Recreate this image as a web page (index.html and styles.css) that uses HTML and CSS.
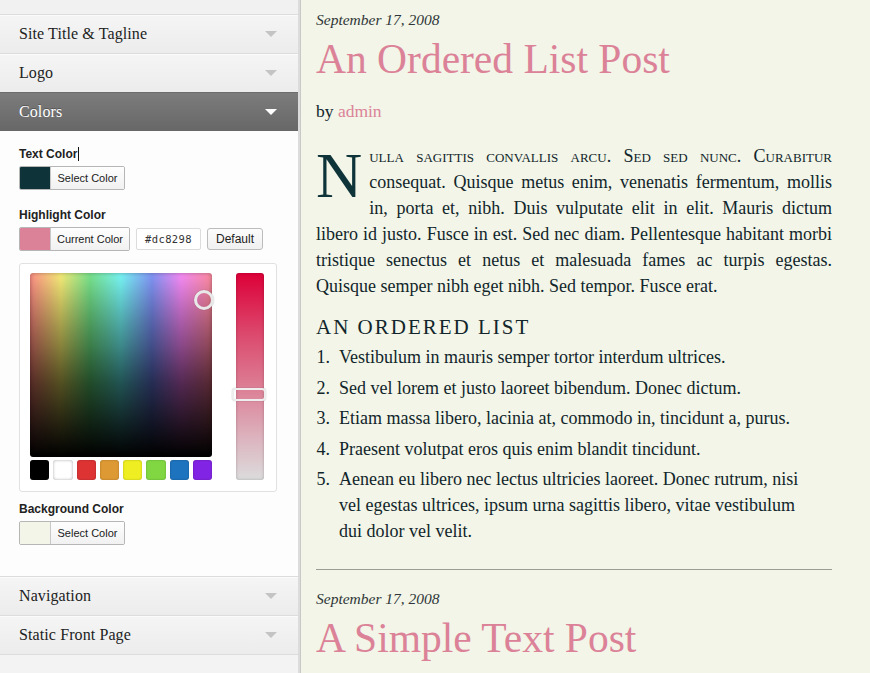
FILE: index.html
```html
<!DOCTYPE html>
<html>
<head>
<meta charset="utf-8">
<link rel="stylesheet" href="styles.css">
</head>
<body>
<div class="app">
  <aside class="sidebar">
    <div class="top-strip"></div>
    <div class="section"><span class="section-title">Site Title &amp; Tagline</span><span class="arrow"></span></div>
    <div class="section"><span class="section-title">Logo</span><span class="arrow"></span></div>
    <div class="section section-open"><span class="section-title">Colors</span><span class="arrow"></span></div>
    <div class="panel">
      <div class="field-label">Text Color<span class="caret"></span></div>
      <div class="color-btn"><span class="swatch swatch-text"></span><span class="btn-text">Select Color</span></div>

      <div class="field-label label-gap">Highlight Color</div>
      <div class="btn-row">
        <div class="color-btn"><span class="swatch swatch-highlight"></span><span class="btn-text btn-text-wide">Current Color</span></div>
        <div class="hex-input">#dc8298</div>
        <div class="default-btn">Default</div>
      </div>

      <div class="picker">
        <div class="picker-left">
          <div class="square"><span class="marker"></span></div>
          <div class="palette">
            <span class="pal pal-black"></span>
            <span class="pal pal-white"></span>
            <span class="pal pal-red"></span>
            <span class="pal pal-orange"></span>
            <span class="pal pal-yellow"></span>
            <span class="pal pal-green"></span>
            <span class="pal pal-blue"></span>
            <span class="pal pal-purple"></span>
          </div>
        </div>
        <div class="strip"><span class="handle"></span></div>
      </div>

      <div class="field-label label-gap-small">Background Color</div>
      <div class="color-btn"><span class="swatch swatch-bg"></span><span class="btn-text">Select Color</span></div>
    </div>
    <div class="section"><span class="section-title">Navigation</span><span class="arrow"></span></div>
    <div class="section"><span class="section-title">Static Front Page</span><span class="arrow"></span></div>
    <div class="bottom-strip"></div>
  </aside>

  <main class="content">
    <article class="post">
      <div class="date">September 17, 2008</div>
      <h1 class="post-title">An Ordered List Post</h1>
      <div class="byline">by <span class="author">admin</span></div>
      <p class="lead"><span class="dropcap">N</span><span class="smallcaps">ulla sagittis convallis arcu. Sed sed nunc. Curabitur</span> consequat. Quisque metus enim, venenatis fermentum, mollis in, porta et, nibh. Duis vulputate elit in elit. Mauris dictum libero id justo. Fusce in est. Sed nec diam. Pellentesque habitant morbi tristique senectus et netus et malesuada fames ac turpis egestas. Quisque semper nibh eget nibh. Sed tempor. Fusce erat.</p>
      <h2 class="list-heading">An Ordered List</h2>
      <ol class="list">
        <li>Vestibulum in mauris semper tortor interdum ultrices.</li>
        <li>Sed vel lorem et justo laoreet bibendum. Donec dictum.</li>
        <li>Etiam massa libero, lacinia at, commodo in, tincidunt a, purus.</li>
        <li>Praesent volutpat eros quis enim blandit tincidunt.</li>
        <li>Aenean eu libero nec lectus ultricies laoreet. Donec rutrum, nisi vel egestas ultrices, ipsum urna sagittis libero, vitae vestibulum dui dolor vel velit.</li>
      </ol>
    </article>
    <hr class="divider">
    <article class="post">
      <div class="date">September 17, 2008</div>
      <h1 class="post-title">A Simple Text Post</h1>
    </article>
  </main>
</div>
</body>
</html>
```

FILE: styles.css
```css
* { box-sizing: border-box; }
html, body { margin: 0; padding: 0; }
body {
  width: 870px;
  height: 673px;
  overflow: hidden;
  background: #f2f5e7;
}
.app {
  display: flex;
  height: 673px;
  overflow: hidden;
}

/* Sidebar */
.sidebar {
  width: 300px;
  flex: 0 0 300px;
  display: flex;
  flex-direction: column;
  background: #f3f3f3;
  border-right: 2px solid #dcdcdc;
  box-shadow: 1px 0 0 #c8c8c8;
}
.top-strip {
  height: 14px;
  flex: 0 0 14px;
  background: #f1f1f1;
}
.section {
  height: 39px;
  flex: 0 0 39px;
  border-top: 1px solid #dcdcdc;
  box-shadow: inset 0 1px 0 #fbfbfb;
  background: linear-gradient(#f5f5f5, #ececec);
  display: flex;
  align-items: center;
  justify-content: space-between;
  padding: 0 21px 0 19px;
  color: #222;
}
.section-title {
  font-family: "Liberation Serif", Georgia, serif;
  font-size: 16px;
  letter-spacing: 0.1px;
}
.arrow {
  width: 0;
  height: 0;
  border-left: 6px solid transparent;
  border-right: 6px solid transparent;
  border-top: 6px solid #c4c4c4;
}
.section-open {
  background: linear-gradient(#7c7c7c, #676767);
  border-top-color: #6d6d6d;
  box-shadow: none;
  color: #fff;
}
.section-open .section-title { text-shadow: 0 -1px 0 #555; }
.section-open .arrow { border-top-color: #fff; }

.panel {
  flex: 0 0 445px;
  background: #fdfdfd;
  padding: 15px 19px 0 19px;
  font-family: "Liberation Sans", Arial, sans-serif;
  color: #222;
}
.field-label {
  font-size: 12px;
  font-weight: bold;
  line-height: 16px;
  height: 16px;
  margin-bottom: 4px;
  color: #222;
  display: flex;
  align-items: center;
}
.caret {
  display: inline-block;
  width: 1px;
  height: 14px;
  background: #111;
  margin-left: 1px;
}
.label-gap { margin-top: 17px; }
.label-gap-small { margin-top: 9px; }

.color-btn {
  display: inline-flex;
  height: 24px;
  border: 1px solid #b6b6b6;
  border-radius: 2px;
  overflow: hidden;
  vertical-align: top;
}
.swatch {
  width: 31px;
  height: 100%;
  border-right: 1px solid #c8c8c8;
}
.swatch-text { background: #0e343a; }
.swatch-highlight { background: #dc8298; }
.swatch-bg { background: #f2f5e7; }
.btn-text {
  width: 73px;
  display: flex;
  align-items: center;
  justify-content: center;
  font-size: 11px;
  color: #222;
  background: linear-gradient(#fefefe, #f1f1f1);
}
.btn-text-wide { width: 78px; }

.btn-row {
  display: flex;
  align-items: center;
  gap: 6px;
}
.hex-input {
  width: 65px;
  height: 22px;
  border: 1px solid #dcdcdc;
  border-radius: 2px;
  background: #fff;
  font-family: "DejaVu Sans Mono", "Liberation Mono", monospace;
  font-size: 10.5px;
  letter-spacing: 0.4px;
  display: flex;
  align-items: center;
  justify-content: center;
  color: #333;
}
.default-btn {
  width: 56px;
  height: 22px;
  border: 1px solid #bcbcbc;
  border-radius: 3px;
  background: linear-gradient(#fcfcfc, #f0f0f0);
  font-size: 12px;
  display: flex;
  align-items: center;
  justify-content: center;
  color: #222;
}

.picker {
  margin-top: 12px;
  width: 258px;
  height: 229px;
  border: 1px solid #e1e1e1;
  border-radius: 3px;
  background: #fff;
  padding: 9px 10px 0 10px;
  display: flex;
  gap: 24px;
}
.picker-left {
  width: 182px;
  display: flex;
  flex-direction: column;
  gap: 3px;
}
.square {
  position: relative;
  width: 182px;
  height: 184px;
  border-radius: 3px;
  background:
    linear-gradient(to bottom, rgba(0,0,0,0) 0%, rgba(0,0,0,0.35) 40%, rgba(0,0,0,1) 100%),
    linear-gradient(to bottom, rgba(255,255,255,0.4) 0%, rgba(128,128,128,0.45) 60%, rgba(128,128,128,0.5) 100%),
    linear-gradient(to right, #ff4838 0%, #f0e020 17%, #20d040 33%, #20f0f0 50%, #3050f0 67%, #f040f0 83%, #ff4060 100%);
  box-shadow: inset 0 0 4px rgba(0,0,0,0.35);
}
.marker {
  position: absolute;
  left: 164px;
  top: 17px;
  width: 20px;
  height: 20px;
  border-radius: 50%;
  border: 3px solid #e8e8e8;
  box-shadow: 0 0 1px rgba(0,0,0,0.4);
}
.palette {
  display: flex;
  gap: 4px;
}
.pal {
  width: 20px;
  height: 20px;
  border-radius: 3px;
  box-shadow: inset 0 0 2px rgba(0,0,0,0.3);
}
.pal-black { background: #000; }
.pal-white { background: #fff; box-shadow: inset 0 0 3px rgba(0,0,0,0.35); }
.pal-red { background: #dd3333; }
.pal-orange { background: #dd9933; }
.pal-yellow { background: #eeee22; }
.pal-green { background: #81d742; }
.pal-blue { background: #1e73be; }
.pal-purple { background: #8224e3; }

.strip {
  position: relative;
  width: 28px;
  height: 207px;
  border-radius: 3px;
  background: linear-gradient(to bottom, #dc0038 0%, #dc4a6e 30%, #dc8298 57%, #dcb4bf 80%, #dcdcdc 100%);
  box-shadow: inset 0 0 3px rgba(0,0,0,0.25);
}
.handle {
  position: absolute;
  left: -4px;
  top: 115px;
  width: 34px;
  height: 13px;
  border: 2px solid #eee;
  border-radius: 4px;
  box-shadow: 0 0 1px rgba(0,0,0,0.5);
}

.bottom-strip {
  flex: 1;
  border-top: 1px solid #dcdcdc;
  background: #f3f3f3;
}

/* Main content */
.content {
  flex: 1;
  padding: 7px 38px 0 16px;
  font-family: "Liberation Serif", "Times New Roman", serif;
  color: #11252b;
}
.post { width: 516px; }
.date {
  font-style: italic;
  font-size: 15.5px;
  line-height: 26px;
  color: #2f3538;
}
.post-title {
  margin: 0;
  font-weight: normal;
  font-size: 41.5px;
  line-height: 52px;
  color: #dc8298;
}
.byline {
  margin-top: 13px;
  font-size: 17.5px;
  line-height: 26px;
}
.author { color: #dc8298; }
.lead {
  margin: 19px 0 0 0;
  font-size: 18px;
  line-height: 26px;
  text-align: justify;
}
.dropcap {
  float: left;
  height: 60px;
  font-size: 64px;
  line-height: 50px;
  margin: 8px 7px 0 0;
  color: #0e343a;
}
.smallcaps {
  font-variant: small-caps;
}
.list-heading {
  margin: 15px 0 0 0;
  font-weight: normal;
  font-size: 21px;
  line-height: 26px;
  text-transform: uppercase;
  letter-spacing: 2px;
  color: #11252b;
}
.list {
  margin: 4px 0 0 0;
  padding-left: 23px;
  font-size: 18px;
  line-height: 26px;
  width: 494px;
}
.list li { margin-bottom: 4.5px; }
.list li::marker { content: counter(list-item) ".\2002"; }
.divider {
  width: 516px;
  margin: 25px 0 16px 0;
  border: 0;
  border-top: 1px solid #9a9c96;
}
```
